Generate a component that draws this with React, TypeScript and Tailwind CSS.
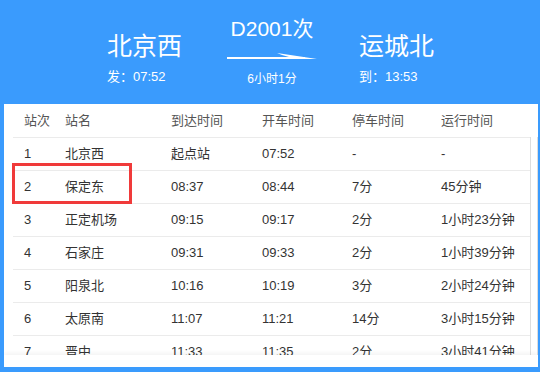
import React from "react";

const rows = [
  ["1", "北京西", "起点站", "07:52", "-", "-"],
  ["2", "保定东", "08:37", "08:44", "7分", "45分钟"],
  ["3", "正定机场", "09:15", "09:17", "2分", "1小时23分钟"],
  ["4", "石家庄", "09:31", "09:33", "2分", "1小时39分钟"],
  ["5", "阳泉北", "10:16", "10:19", "3分", "2小时24分钟"],
  ["6", "太原南", "11:07", "11:21", "14分", "3小时15分钟"],
  ["7", "晋中", "11:33", "11:35", "2分", "3小时41分钟"],
];

const cols = "grid grid-cols-[41px_106px_91px_90px_89px_100px]";

export default function App() {
  return (
    <div
      className="w-[540px] h-[372px] bg-[#3a9bfd] flex flex-col pl-[4px] pr-[2px] pb-[5px] overflow-hidden"
      style={{ fontFamily: '"Liberation Sans", "Noto Sans CJK SC", sans-serif' }}
    >
      <div className="h-[104px] flex justify-center text-white pl-[2px]">
        <div className="flex flex-col w-[78px] pt-[31px]">
          <div className="text-[25px] leading-[30px] whitespace-nowrap">北京西</div>
          <div className="text-[13px] leading-[16px] mt-[8px] whitespace-nowrap">发：07:52</div>
        </div>
        <div className="flex flex-col items-center w-[90px] mx-[42px] pt-[16px]">
          <div className="text-[21px] leading-[26px] whitespace-nowrap">D2001次</div>
          <svg width="90" height="10" viewBox="0 0 90 10" className="mt-[8px]">
            <rect x="0" y="7" width="78" height="2" fill="#ffffff" />
            <polygon points="50,3 90,9 60,9 62,7 55,5" fill="#ffffff" />
          </svg>
          <div className="text-[12px] leading-[16px] mt-[11px] whitespace-nowrap">6小时1分</div>
        </div>
        <div className="flex flex-col w-[78px] pt-[31px]">
          <div className="text-[25px] leading-[30px] whitespace-nowrap">运城北</div>
          <div className="text-[13px] leading-[16px] mt-[8px] whitespace-nowrap">到：13:53</div>
        </div>
      </div>
      <div className="flex-1 bg-white relative overflow-hidden">
        <div className={`${cols} h-[33px] items-center ml-[9px] text-[13px] text-[#555]`}>
          {["站次", "站名", "到达时间", "开车时间", "停车时间", "运行时间"].map((h) => (
            <div key={h} className="pl-[11px] whitespace-nowrap">{h}</div>
          ))}
        </div>
        <div className="flex ml-[9px]">
          <div className="w-[517px]">
            {rows.map((r) => (
              <div key={r[0]} className={`${cols} h-[33px] items-center border-t border-[#ebebeb] text-[13px] text-[#333]`}>
                {r.map((c, i) => (
                  <div key={i} className="pl-[11px] whitespace-nowrap">{c}</div>
                ))}
              </div>
            ))}
          </div>
          <div className="w-[8px] h-[220px] border-l border-r border-[#dddddd]" />
        </div>
        <div className="absolute left-0 right-0 bottom-0 h-[12px] bg-white shadow-[0_-2px_4px_rgba(0,0,0,0.05)]" />
        <div className="absolute left-[8px] top-[59px] w-[120px] h-[41px] border-[3px] border-[#f03a3a]" />
      </div>
    </div>
  );
}
